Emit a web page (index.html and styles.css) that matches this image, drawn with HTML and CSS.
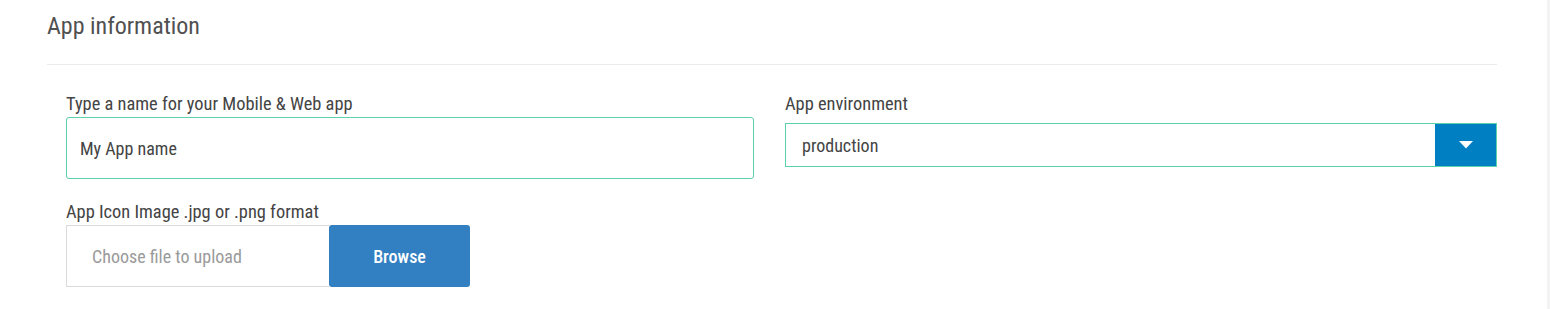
FILE: index.html
```html
<!DOCTYPE html>
<html>
<head>
<meta charset="utf-8">
<link rel="stylesheet" href="styles.css">
</head>
<body>
<div class="page">
  <section class="panel">
    <h2 class="panel-title">App information</h2>
    <hr class="divider">
    <div class="row">
      <div class="field field-name">
        <label class="label">Type a name for your Mobile &amp; Web app</label>
        <div class="text-input">My App name</div>
      </div>
      <div class="field field-env">
        <label class="label">App environment</label>
        <div class="select">
          <span class="select-value">production</span>
          <span class="select-btn">
            <svg width="14" height="8" viewBox="0 0 14 8"><path d="M0 0 H14 L7 7.5 Z" fill="#fff"/></svg>
          </span>
        </div>
      </div>
    </div>
    <div class="field field-icon">
      <label class="label">App Icon Image .jpg or .png format</label>
      <div class="upload">
        <div class="upload-box">Choose file to upload</div>
        <button class="upload-btn">Browse</button>
      </div>
    </div>
  </section>
  <div class="edge"></div>
</div>
</body>
</html>
```

FILE: styles.css
```css
* { box-sizing: border-box; }
html, body { margin: 0; padding: 0; background: #fff; }
body {
  font-family: "Roboto Condensed", "Roboto", "Liberation Sans", sans-serif;
  font-stretch: condensed;
  color: #4a4a4a;
  width: 1550px;
  height: 309px;
  overflow: hidden;
}
.page { display: flex; height: 309px; }
.panel { width: 1547px; padding: 0 50px 0 47px; }
.edge { width: 3px; background: #f3f3f3; }
.panel-title {
  margin: 0;
  padding-top: 12px;
  height: 64px;
  font-size: 24px;
  font-weight: 400;
  line-height: 28px;
  color: #505050;
}
.divider { margin: 0; border: 0; border-top: 1px solid #ebebeb; }
.row { display: flex; padding-top: 26px; }
.field { display: flex; flex-direction: column; }
.field-name { margin-left: 19px; width: 688px; flex: none; }
.field-env { margin-left: 31px; flex: 1; }
.label { font-size: 18.4px; line-height: 26px; color: #444; }
.field-env .label { padding-bottom: 6px; }
.text-input {
  height: 62px;
  border: 1px solid #5cd1ac;
  border-radius: 3px;
  padding: 0 13px;
  display: flex; align-items: center;
  font-size: 18px; color: #444;
}
.select {
  height: 44px;
  border: 1px solid #5cd1ac;
  display: flex; align-items: stretch;
}
.select-value { flex: 1; display: flex; align-items: center; padding-left: 16px; font-size: 18px; color: #444; }
.select-btn { width: 61px; background: #0080c3; display: flex; align-items: center; justify-content: center; }
.field-icon { margin-left: 19px; padding-top: 20px; }
.upload { display: flex; }
.upload-box {
  width: 263px; height: 62px;
  border: 1px solid #dadada; border-right: 0;
  display: flex; align-items: center;
  padding-left: 25px;
  font-size: 18px; color: #9a9a9a;
}
.upload-btn {
  width: 141px; height: 62px;
  border: 0; border-radius: 3px;
  background: #327fc2; color: #fff;
  font-family: inherit; font-stretch: condensed;
  font-size: 18px; font-weight: 500;
}
```
